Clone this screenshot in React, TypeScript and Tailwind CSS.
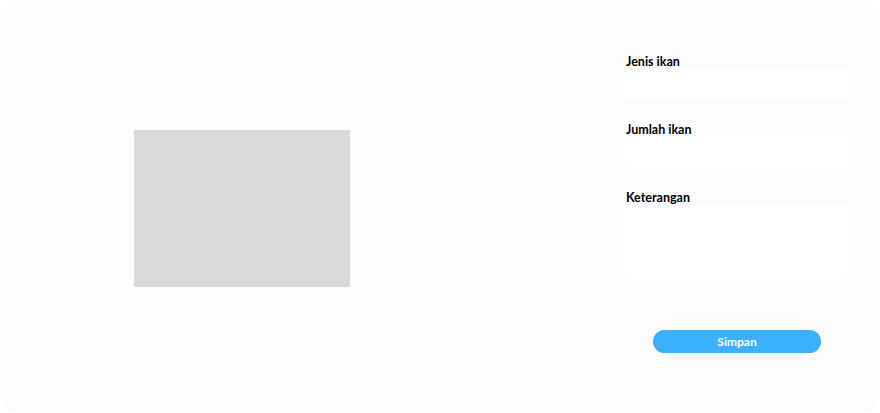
import React from 'react'

function Field({ label, tall }: { label: string; tall?: boolean }) {
  return (
    <div className="flex flex-col">
      <label className="h-[15px] text-[12.5px] leading-[15px] font-bold text-black">{label}</label>
      {tall ? (
        <textarea className="h-[73px] w-[221px] resize-none bg-white outline-none" />
      ) : (
        <input className="h-[30px] w-[221px] bg-white outline-none" />
      )}
    </div>
  )
}

export default function App() {
  return (
    <div className="bg-white">
      <div
        className="flex h-[413px] w-[880px] rounded-[20px] bg-[#fcfcfc]"
        style={{ fontFamily: 'Lato, "Noto Sans", sans-serif' }}
      >
        {/* Image placeholder */}
        <div className="flex w-[484px] items-center justify-center pt-[4px]">
          <div className="h-[157px] w-[216px] bg-[#d9d9d9]" />
        </div>

        {/* Form */}
        <div className="ml-[142px] flex flex-col pt-[54px]">
          <Field label="Jenis ikan" />
          <div className="mt-[23px]">
            <Field label="Jumlah ikan" />
          </div>
          <div className="mt-[23px]">
            <Field label="Keterangan" tall />
          </div>
          <button className="ml-[27px] mt-[52px] h-[23px] w-[168px] rounded-full bg-[#3bb0ff] text-[12px] font-bold text-white">
            Simpan
          </button>
        </div>
      </div>
    </div>
  )
}
